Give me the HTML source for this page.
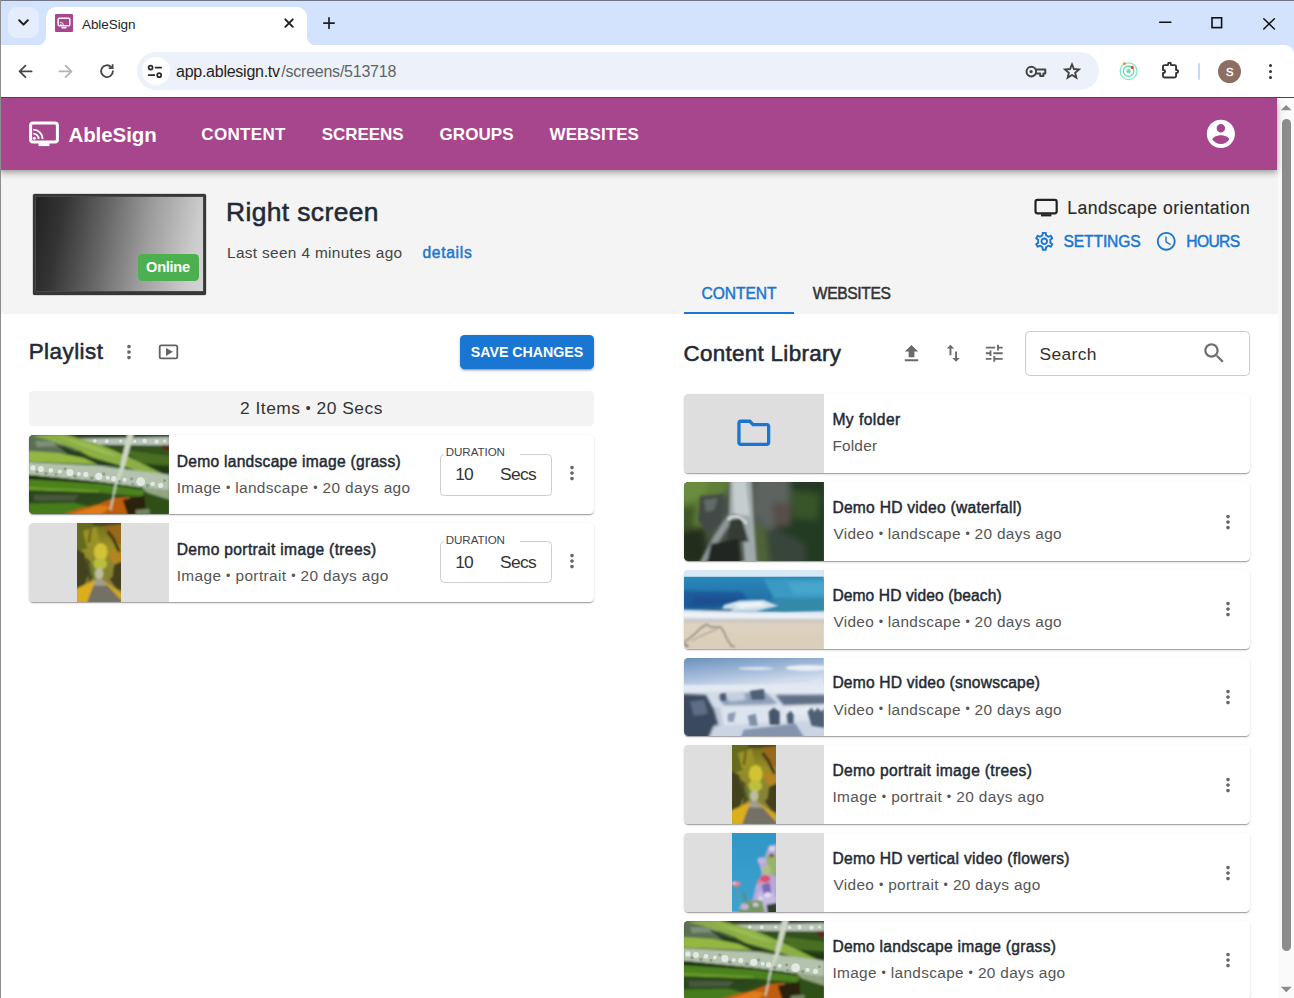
<!DOCTYPE html>
<html lang="en">
<head>
<meta charset="utf-8">
<title>AbleSign</title>
<style>
*{box-sizing:border-box;margin:0;padding:0}
html,body{width:1294px;height:998px;overflow:hidden;background:#fff}
body{position:relative;font-family:"Liberation Sans",Arial,sans-serif;color:#333;-webkit-font-smoothing:antialiased}
.abs{position:absolute}
.t{position:absolute;white-space:nowrap;line-height:1;transform-origin:0 0}
.med{-webkit-text-stroke:0.35px currentColor}
svg{display:block;position:absolute;overflow:visible}

/* ---------- browser chrome ---------- */
#tabstrip{left:0;top:0;width:1294px;height:60px;background:#d3e3fd}
#topline{left:0;top:0;width:1294px;height:1px;background:#6f7787}
#tabdd{left:8px;top:7px;width:31px;height:31px;border-radius:9px;background:#e4edfc}
#tab{left:46px;top:7px;width:261px;height:39px;background:#fff;border-radius:10px 10px 0 0}
#tab:before,#tab:after{content:"";position:absolute;bottom:0;width:10px;height:10px}
#tab:before{left:-10px;background:radial-gradient(circle at 0 0,rgba(255,255,255,0) 9.5px,#fff 10.5px)}
#tab:after{right:-10px;background:radial-gradient(circle at 100% 0,rgba(255,255,255,0) 9.5px,#fff 10.5px)}
#toolbar{left:0;top:45.4px;width:1294px;height:52px;background:#fff;border-radius:0 9px 0 0}
#omni{left:137px;top:52px;width:962px;height:38px;border-radius:19px;background:#edf2fa}
#sitebtn{left:142px;top:57px;width:28px;height:28px;border-radius:14px;background:#fff}
#pageline{left:0;top:97px;width:1294px;height:1px;background:#5a3a55}
#leftline{left:0;top:0;width:1px;height:998px;background:#8d8d8d}

/* ---------- app ---------- */
#appbar{left:0;top:98px;width:1277px;height:71.5px;background:#a7458d;box-shadow:0 2.25px 4.5px -1.1px rgba(0,0,0,.2),0 4.5px 5.6px 0 rgba(0,0,0,.14),0 1.1px 11px 0 rgba(0,0,0,.12);clip-path:inset(0 -30px -30px -30px)}
#grayzone{left:0;top:98px;width:1278px;height:216px;background:#f4f4f4}
#sbtrack{left:1278px;top:98px;width:16px;height:900px;background:#fafafa}
#sbthumb{left:1281.6px;top:119px;width:9.6px;height:832px;border-radius:5px;background:#8c8c8c}
</style>
</head>
<body>

<!-- ================= BROWSER CHROME ================= -->
<div class="abs" id="tabstrip"></div>
<div class="abs" id="tabdd"></div>
<div class="abs" id="tab"></div>
<div class="abs" id="toolbar"></div>
<div class="abs" id="omni"></div>
<div class="abs" id="sitebtn"></div>
<div class="abs" id="topline"></div>
<svg style="left:17px;top:17px" width="13" height="11" viewBox="0 0 13 11" stroke-linecap="round" stroke-linejoin="round" fill="none" stroke="#1f1f1f" stroke-width="2"><path d="M2.2 3.2 L6.5 7.6 L10.8 3.2"/></svg>
<div class="abs" style="left:55px;top:14px;width:18px;height:18px;background:#a8458d;border-radius:1px"></div>
<svg style="left:57px;top:17px" width="14" height="12" viewBox="0 0 14 12" fill="none" stroke="#fff"><rect x="1.2" y="1.2" width="11.6" height="7.6" rx="1" stroke-width="1.5"/><path d="M4.5 10.7h5" stroke-width="1.6"/><path d="M3 7.2a1.6 1.6 0 0 1 1.6 1.6M3 5.2a3.6 3.6 0 0 1 3.6 3.6" stroke-width="0.9"/></svg>
<span class="t" style="left:82.00px;top:17.60px;font-size:13.5px;font-weight:400;color:#1f1f1f;letter-spacing:-0.071px;">AbleSign</span>
<svg style="left:283px;top:17px" width="12" height="12" viewBox="0 0 12 12" stroke-linecap="round" stroke-linejoin="round" fill="none" stroke="#1f1f1f" stroke-width="1.9"><path d="M2.3 2.3 L9.8 9.8 M9.8 2.3 L2.3 9.8"/></svg>
<svg style="left:322px;top:16px" width="14" height="14" viewBox="0 0 14 14" stroke-linecap="round" stroke-linejoin="round" fill="none" stroke="#1f1f1f" stroke-width="1.7"><path d="M7 1.9 V12.3 M1.8 7.1 H12.2"/></svg>
<svg style="left:1158px;top:15px" width="14" height="14" viewBox="0 0 14 14" stroke-linecap="round" stroke-linejoin="round" fill="none" stroke="#111" stroke-width="1.5"><path d="M1.7 7.3 H12.9"/></svg>
<svg style="left:1210px;top:16px" width="14" height="14" viewBox="0 0 14 14" fill="none" stroke="#111" stroke-width="1.6"><rect x="2" y="1.8" width="9.6" height="9.8"/></svg>
<svg style="left:1262px;top:17px" width="14" height="14" viewBox="0 0 14 14" stroke-linecap="round" stroke-linejoin="round" fill="none" stroke="#111" stroke-width="1.5"><path d="M1.8 1.7 L12.4 12 M12.4 1.7 L1.8 12"/></svg>
<svg style="left:17px;top:63px" width="17" height="17" viewBox="0 0 17 17" stroke-linecap="round" stroke-linejoin="round" fill="none" stroke="#474747" stroke-width="1.8"><path d="M14.6 8.4 H2.6 M8.4 2.6 L2.6 8.4 L8.4 14.2"/></svg>
<svg style="left:57px;top:63px" width="17" height="17" viewBox="0 0 17 17" stroke-linecap="round" stroke-linejoin="round" fill="none" stroke="#b4b4b4" stroke-width="1.8"><path d="M2.4 8.4 H14.4 M8.6 2.6 L14.4 8.4 L8.6 14.2"/></svg>
<svg style="left:99px;top:63px" width="16" height="16" viewBox="0 0 16 16" stroke-linecap="round" stroke-linejoin="round" fill="none" stroke="#474747" stroke-width="1.8"><path d="M13.9 8.2 A5.9 5.9 0 1 1 12.1 3.9"/><path d="M13.6 1.3 V5.2 H9.7" stroke-linejoin="miter" stroke-linecap="butt"/></svg>
<svg style="left:147px;top:64px" width="16" height="15" viewBox="0 0 16 15" stroke-linecap="round" stroke-linejoin="round" fill="none" stroke="#2b2b2b" stroke-width="1.7"><circle cx="3.6" cy="3.6" r="2"/><path d="M8.6 3.6 H14.2"/><circle cx="12.2" cy="11.2" r="2"/><path d="M1.6 11.2 H7.4"/></svg>
<span class="t" style="left:176.00px;top:63.50px;font-size:16px;font-weight:400;color:#1f1f1f;letter-spacing:-0.257px;">app.ablesign.tv</span>
<span class="t" style="left:281.30px;top:63.50px;font-size:16px;font-weight:400;color:#5f6368;letter-spacing:-0.236px;">/screens/513718</span>
<svg style="left:1025px;top:64px" width="22" height="15" viewBox="0 0 22 15" fill="none" stroke="#444" stroke-width="2" stroke-linejoin="round"><circle cx="6.3" cy="7.6" r="4.8"/><circle cx="6.1" cy="7.6" r="1.6" fill="#444" stroke="none"/><path d="M11 5.6 H20.3 V9.6 H18.4 V12 H15.2 V9.6 H11"/></svg>
<svg style="left:1063px;top:62px" width="18" height="18" viewBox="0 0 24 24" fill="none" stroke="#444" stroke-width="2.5" stroke-linejoin="miter"><path d="M12 3.2 L14.6 9.4 L21.3 9.9 L16.2 14.3 L17.8 20.9 L12 17.4 L6.2 20.9 L7.8 14.3 L2.7 9.9 L9.4 9.4 Z"/></svg>
<svg style="left:1118px;top:60px" width="22" height="22" viewBox="0 0 22 22" fill="none"><circle cx="10.6" cy="11.2" r="8.4" stroke="#86e6c2" stroke-width="1.2"/><circle cx="10.6" cy="11.2" r="5.2" stroke="#5cdcaa" stroke-width="1.3"/><circle cx="10.6" cy="11.2" r="2.1" fill="#5fe2ad"/><circle cx="14.2" cy="7.4" r="1.6" fill="#ea4a2e"/><circle cx="6.4" cy="3.6" r="1.4" fill="#f2842c"/></svg>
<svg style="left:1159px;top:60px" width="22" height="21" viewBox="0 0 22 21" fill="none" stroke="#333" stroke-width="1.9" stroke-linejoin="round"><path d="M5.5 5.1 H9 V4.3 A1.5 1.5 0 0 1 12 4.3 V5.1 H15.6 A1.5 1.5 0 0 1 17.1 6.6 V10 H17.6 A1.5 1.5 0 0 1 17.6 13 H17.1 V16 A1.5 1.5 0 0 1 15.6 17.5 H5.5 A1.5 1.5 0 0 1 4 16 V13 H4.6 A1.5 1.5 0 0 0 4.6 10 H4 V6.6 A1.5 1.5 0 0 1 5.5 5.1 Z"/></svg>
<div class="abs" style="left:1198.4px;top:62.5px;width:1.6px;height:17px;background:#c6d9f8;border-radius:1px"></div>
<div class="abs" style="left:1218px;top:59.6px;width:23px;height:23px;border-radius:50%;background:#8d6e63"></div>
<span class="t" style="left:1226.10px;top:66.70px;font-size:11.2px;font-weight:400;color:#fff;letter-spacing:0.000px;-webkit-text-stroke:0.46px currentColor;">S</span>
<div class="abs" style="left:1268.5px;top:64.1px;width:3.4px;height:3.4px;border-radius:50%;background:#333"></div>
<div class="abs" style="left:1268.5px;top:69.9px;width:3.4px;height:3.4px;border-radius:50%;background:#333"></div>
<div class="abs" style="left:1268.5px;top:75.7px;width:3.4px;height:3.4px;border-radius:50%;background:#333"></div>

<!-- ================= APP ================= -->
<div class="abs" id="grayzone"></div>
<div class="abs" id="sbtrack"></div>
<div class="abs" id="sbthumb"></div>
<svg style="left:1280px;top:104px" width="12" height="7" viewBox="0 0 12 7"><path d="M0.8 6.2 L6.2 1 L11.6 6.2 Z" fill="#8c8c8c"/></svg>
<svg style="left:1280px;top:986px" width="12" height="7" viewBox="0 0 12 7"><path d="M0.8 0.8 L6.3 6.2 L11.8 0.8 Z" fill="#8c8c8c"/></svg><!--sbup-->
<div class="abs" style="left:33.3px;top:193.9px;width:172.8px;height:100.7px;background:#363636;border-radius:1.5px;box-shadow:0 0 0 .5px rgba(0,0,0,.25)"></div>
<div class="abs" style="left:36.2px;top:196.8px;width:166.6px;height:93.8px;box-shadow:0 0 0 .6px #555;background:linear-gradient(101deg,#222 0%,#343434 16%,#666 40%,#9c9c9c 64%,#cbcbcb 90%,#d4d4d4 100%)"></div>
<div class="abs" style="left:137.7px;top:253.6px;width:60.9px;height:27px;background:#4caf50;border-radius:4.5px"></div>
<span class="t" style="left:146.10px;top:260.00px;font-size:14.6px;font-weight:700;color:#fff;letter-spacing:-0.280px;">Online</span>
<span class="t" style="left:226.00px;top:198.70px;font-size:26.4px;font-weight:400;color:#222a35;letter-spacing:0.391px;-webkit-text-stroke:0.55px currentColor;">Right screen</span>
<span class="t" style="left:227.00px;top:245.20px;font-size:15.4px;font-weight:400;color:#444;letter-spacing:0.336px;">Last seen 4 minutes ago</span>
<span class="t" style="left:422.40px;top:245.20px;font-size:15.6px;font-weight:400;color:#1976d2;letter-spacing:0.717px;-webkit-text-stroke:0.46px currentColor;">details</span>
<svg style="left:1033px;top:197px" width="26" height="21" viewBox="0 0 26 21" fill="none" stroke="#222"><rect x="2.5" y="2.9" width="21.2" height="13.4" rx="2" stroke-width="2.2"/><path d="M8 18.3h10.4" stroke-width="2.2"/></svg>
<span class="t" style="left:1067.30px;top:199.60px;font-size:17.6px;font-weight:400;color:#2a2a2a;letter-spacing:0.470px;-webkit-text-stroke:.15px #2a2a2a;">Landscape orientation</span>
<svg style="left:1032.9px;top:230.3px" width="22.5" height="22.5" viewBox="0 0 24 24" fill="#1976d2" ><path d="M19.43 12.98c.04-.32.07-.64.07-.98 0-.34-.03-.66-.07-.98l2.11-1.65c.19-.15.24-.42.12-.64l-2-3.46c-.09-.16-.26-.25-.44-.25-.06 0-.12.01-.17.03l-2.49 1c-.52-.4-1.08-.73-1.69-.98l-.38-2.65C14.46 2.18 14.25 2 14 2h-4c-.25 0-.46.18-.49.42l-.38 2.65c-.61.25-1.17.59-1.69.98l-2.49-1c-.06-.02-.12-.03-.18-.03-.17 0-.34.09-.43.25l-2 3.46c-.13.22-.07.49.12.64l2.11 1.65c-.04.32-.07.65-.07.98 0 .33.03.66.07.98l-2.11 1.65c-.19.15-.24.42-.12.64l2 3.46c.09.16.26.25.44.25.06 0 .12-.01.17-.03l2.49-1c.52.4 1.08.73 1.69.98l.38 2.65c.03.24.24.42.49.42h4c.25 0 .46-.18.49-.42l.38-2.65c.61-.25 1.17-.59 1.69-.98l2.49 1c.06.02.12.03.18.03.17 0 .34-.09.43-.25l2-3.46c.12-.22.07-.49-.12-.64l-2.11-1.65zm-1.98-1.71c.04.31.05.52.05.73 0 .21-.02.43-.05.73l-.14 1.13.89.7 1.08.84-.7 1.21-1.27-.51-1.04-.42-.9.68c-.43.32-.84.56-1.25.73l-1.06.43-.16 1.13-.2 1.35h-1.4l-.19-1.35-.16-1.13-1.06-.43c-.43-.18-.83-.41-1.23-.71l-.91-.7-1.06.43-1.27.51-.7-1.21 1.08-.84.89-.7-.14-1.13c-.03-.31-.05-.54-.05-.74s.02-.43.05-.73l.14-1.13-.89-.7-1.08-.84.7-1.21 1.27.51 1.04.42.9-.68c.43-.32.84-.56 1.25-.73l1.06-.43.16-1.13.2-1.35h1.39l.19 1.35.16 1.13 1.06.43c.43.18.83.41 1.23.71l.91.7 1.06-.43 1.27-.51.7 1.21-1.07.85-.89.7.14 1.13zM12 8c-2.21 0-4 1.79-4 4s1.79 4 4 4 4-1.79 4-4-1.79-4-4-4zm0 6c-1.1 0-2-.9-2-2s.9-2 2-2 2 .9 2 2-.9 2-2 2z"/></svg>
<span class="t" style="left:1063.50px;top:233.60px;font-size:15.6px;font-weight:400;color:#1976d2;letter-spacing:-0.114px;-webkit-text-stroke:0.46px currentColor;">SETTINGS</span>
<svg style="left:1155.1px;top:230.1px" width="22.5" height="22.5" viewBox="0 0 24 24" fill="#1976d2" ><path d="M11.99 2C6.47 2 2 6.48 2 12s4.47 10 9.99 10C17.52 22 22 17.52 22 12S17.52 2 11.99 2zM12 20c-4.42 0-8-3.58-8-8s3.58-8 8-8 8 3.58 8 8-3.58 8-8 8zm.5-13H11v6l5.25 3.15.75-1.23-4.5-2.67z"/></svg>
<span class="t" style="left:1186.30px;top:233.60px;font-size:15.6px;font-weight:400;color:#1976d2;letter-spacing:-0.625px;-webkit-text-stroke:0.46px currentColor;">HOURS</span>
<span class="t" style="left:701.50px;top:285.80px;font-size:15.6px;font-weight:400;color:#1976d2;letter-spacing:-0.067px;-webkit-text-stroke:0.46px currentColor;">CONTENT</span>
<span class="t" style="left:812.80px;top:285.80px;font-size:15.6px;font-weight:400;color:#333;letter-spacing:-0.357px;-webkit-text-stroke:0.46px currentColor;">WEBSITES</span>
<div class="abs" style="left:683.9px;top:311.8px;width:110.4px;height:2.6px;background:#1976d2"></div>
<svg width="0" height="0" style="position:absolute"><defs>
<filter id="bl0" x="-5%" y="-5%" width="110%" height="110%"><feGaussianBlur stdDeviation="0.5"/></filter>
<filter id="bl1" x="-5%" y="-5%" width="110%" height="110%"><feGaussianBlur stdDeviation="0.9"/></filter>
<filter id="bl2" x="-5%" y="-5%" width="110%" height="110%"><feGaussianBlur stdDeviation="1.8"/></filter>
<filter id="bl3" x="-10%" y="-10%" width="120%" height="120%"><feGaussianBlur stdDeviation="3.2"/></filter>
<linearGradient id="gSea" x1="0" y1="0" x2="0" y2="1"><stop offset="0" stop-color="#2888bb"/><stop offset=".4" stop-color="#2579ad"/><stop offset=".8" stop-color="#236ea4"/><stop offset="1" stop-color="#4595b6"/></linearGradient>
<linearGradient id="gSky" x1="0" y1="0" x2=".5" y2="1"><stop offset="0" stop-color="#6a90bd"/><stop offset=".55" stop-color="#a5bcd9"/><stop offset="1" stop-color="#dbe4f0"/></linearGradient>
<linearGradient id="gTree" x1="0" y1="0" x2="0" y2="1"><stop offset="0" stop-color="#6f6c1c"/><stop offset=".3" stop-color="#988f25"/><stop offset=".6" stop-color="#868436"/><stop offset="1" stop-color="#8a7a3a"/></linearGradient>
<linearGradient id="gFall" x1="0" y1="0" x2="1" y2="0"><stop offset="0" stop-color="#4a6230"/><stop offset=".25" stop-color="#474f47"/><stop offset=".6" stop-color="#535c56"/><stop offset=".8" stop-color="#30422d"/><stop offset="1" stop-color="#243a22"/></linearGradient>
<linearGradient id="gSand" x1="0" y1="0" x2="0" y2="1"><stop offset="0" stop-color="#d9d2ca"/><stop offset=".3" stop-color="#e2d8c9"/><stop offset="1" stop-color="#dacdb9"/></linearGradient>
<linearGradient id="gFlow" x1="0" y1="0" x2="0" y2="1"><stop offset="0" stop-color="#2f97c6"/><stop offset="1" stop-color="#3ea2cd"/></linearGradient>
</defs></svg>
<span class="t" style="left:28.70px;top:341.00px;font-size:22.4px;font-weight:400;color:#222a35;letter-spacing:0.471px;-webkit-text-stroke:0.55px currentColor;">Playlist</span>
<svg style="left:117.6px;top:340.6px" width="22" height="22" viewBox="0 0 24 24" fill="#686868" ><path d="M12 8c1.1 0 2-.9 2-2s-.9-2-2-2-2 .9-2 2 .9 2 2 2zm0 2c-1.1 0-2 .9-2 2s.9 2 2 2 2-.9 2-2-.9-2-2-2zm0 6c-1.1 0-2 .9-2 2s.9 2 2 2 2-.9 2-2-.9-2-2-2z"/></svg>
<svg style="left:157px;top:341.6px" width="23" height="19" viewBox="0 0 23 19" fill="none" stroke="#626262"><rect x="2.7" y="3.3" width="17.6" height="13" rx="1.6" stroke-width="1.8"/><path d="M9 5.9 L15.9 9.8 L9 13.9 Z" fill="#626262" stroke="none"/></svg>
<div class="abs" style="left:460px;top:334.8px;width:134.2px;height:34px;background:#1976d2;border-radius:4.5px;box-shadow:0 3px 1px -2px rgba(0,0,0,.2),0 2px 2px 0 rgba(0,0,0,.14),0 1px 5px 0 rgba(0,0,0,.12)"></div>
<span class="t" style="left:470.80px;top:345.00px;font-size:14.2px;font-weight:700;color:#fff;letter-spacing:-0.009px;">SAVE CHANGES</span>
<div class="abs" style="left:29.3px;top:390.5px;width:564.6px;height:35px;background:#f3f3f3;border-radius:4.5px"></div>
<span class="t" style="left:240.00px;top:400.00px;font-size:17.4px;font-weight:400;color:#333;letter-spacing:0.500px;">2 Items <span style="font-size:.8em;position:relative;top:-.1em">•</span> 20 Secs</span>
<div class="abs" style="left:29.3px;top:435.4px;width:564.7px;height:78.75px;background:#fff;border-radius:4.5px;box-shadow:0 2px 1px -1px rgba(0,0,0,.2),0 1px 1px 0 rgba(0,0,0,.14),0 1px 3px 0 rgba(0,0,0,.12)"></div>
<div class="abs" style="left:29.3px;top:435.4px;width:139.6px;height:78.75px;background:#dedede;border-radius:4.5px 0 0 4.5px"></div>
<svg style="left:29.3px;top:435.4px;border-radius:4.5px 0 0 4.5px;overflow:hidden" width="139.6" height="78.75" viewBox="0 0 140 79" preserveAspectRatio="none"><rect width="140" height="79" fill="#2c4a1b"/>
<g filter="url(#bl1)">
<polygon points="-1,-1 42,-1 62,12 40,19 -1,17" fill="#5a7052"/>
<polygon points="6,6 30,6 34,11 8,12" fill="#7d8f78"/>
<polygon points="25,8 62,22 92,31 70,31 40,20" fill="#28401a"/>
<polygon points="60,9 141,9 141,41 105,35 90,26" fill="#30511b"/>
<polygon points="96,15 141,21 141,30 110,28" fill="#487020"/>
<polygon points="118,30 141,32 141,40 126,37" fill="#213a14"/>
<rect x="34" y="-1" width="108" height="3.4" fill="#27371e"/>
<polygon points="50,3.4 141,2 141,10.5 60,9.5" fill="#b9c3b8"/>
<polygon points="133,10 141,10 141,16 135,16" fill="#5a2a1a"/>
<polygon points="3,1 35,-1 70,9 100,22 136,40 110,36 90,30 62,22 45,13 20,5" fill="#8caf45"/>
<polygon points="30,2 60,9 90,21 80,20 50,10" fill="#9cbd53"/>
<polygon points="-1,16 30,18 55,23 69,29.5 -1,26.5" fill="#95b743"/>
<polygon points="-1,27 70,30.5 105,35 141,40 141,56 115,53 70,47 38,43.7 -1,40" fill="#b3c3ae"/>
<polygon points="112,52 141,56 141,65 118,58" fill="#93a583"/>
<polygon points="-1,40 38,43.7 70,47 114,53 114,55 70,49.5 38,46.3 -1,44.5" fill="#1c3010"/>
<polygon points="-1,44.5 70,49 115,55 116,62 70,58 -1,55.4" fill="#4b821f"/>
<polygon points="-1,52 70,55.4 70,57.6 -1,55.4" fill="#6a9a2a"/>
<polygon points="-1,55.4 76,58 70,64 35,70 -1,69" fill="#2b471b"/>
<polygon points="5,60 50,60.5 45,66 5,66" fill="#46593c"/>
<polygon points="-1,68.8 45,68 60,72 35,80 -1,80" fill="#467c1a"/>
<polygon points="114,59 141,65 141,80 116,80" fill="#2f4f18"/>
<polygon points="33,80 50,74 70,69 85,63 101,62 101,80" fill="#c05d0e"/>
<polygon points="40,80 70,70.5 82,72 72,80" fill="#e07c12"/>
<polygon points="94,65 116,61 117,80 99,80" fill="#2a2010"/>
<polygon points="107,75 121,74 121,80 107,80" fill="#6f8560"/>
<polygon points="98.7,-1 105,-1 95.4,34 88,50 82.4,75.5 81,75 86,50 90.7,34" fill="#cdd7c2"/>
</g>
<g filter="url(#bl0)"><circle cx="4" cy="33" r="2.6" fill="#e2e9e2"/><circle cx="12" cy="34" r="3" fill="#e2e9e2"/><circle cx="22" cy="35.5" r="2.4" fill="#e2e9e2"/><circle cx="31" cy="36.5" r="2" fill="#e2e9e2"/><circle cx="41" cy="37.6" r="3.6" fill="#e2e9e2"/><circle cx="50" cy="39" r="2" fill="#e2e9e2"/><circle cx="57" cy="39.5" r="2.6" fill="#e2e9e2"/><circle cx="70" cy="41.5" r="3.6" fill="#e2e9e2"/><circle cx="79" cy="43" r="2" fill="#e2e9e2"/><circle cx="85" cy="43.8" r="2.6" fill="#e2e9e2"/><circle cx="96" cy="45" r="2" fill="#e2e9e2"/><circle cx="112" cy="46.8" r="4.4" fill="#e2e9e2"/><circle cx="124" cy="49" r="2.2" fill="#e2e9e2"/><circle cx="132" cy="50.5" r="2.6" fill="#e2e9e2"/><circle cx="8" cy="37" r="1.6" fill="#8c9f88"/><circle cx="17" cy="38.6" r="1.8" fill="#8c9f88"/><circle cx="27" cy="39.5" r="1.5" fill="#8c9f88"/><circle cx="36" cy="34" r="1.4" fill="#8c9f88"/><circle cx="46" cy="41.5" r="1.8" fill="#8c9f88"/><circle cx="63" cy="43.5" r="2" fill="#8c9f88"/><circle cx="75" cy="39" r="1.6" fill="#8c9f88"/><circle cx="91" cy="47" r="1.8" fill="#8c9f88"/><circle cx="103" cy="44" r="1.6" fill="#8c9f88"/><circle cx="119" cy="51" r="2" fill="#8c9f88"/><circle cx="104" cy="49.5" r="1.6" fill="#8c9f88"/><circle cx="136" cy="46" r="1.5" fill="#8c9f88"/><circle cx="66" cy="6" r="1.8" fill="#dfe5df"/><circle cx="78" cy="6.2" r="2" fill="#dfe5df"/><circle cx="92" cy="6" r="1.6" fill="#dfe5df"/><circle cx="106" cy="6.4" r="1.6" fill="#dfe5df"/><circle cx="116" cy="6" r="2.2" fill="#dfe5df"/><circle cx="128" cy="6.6" r="2.2" fill="#dfe5df"/><circle cx="136" cy="6" r="1.6" fill="#dfe5df"/></g></svg>
<span class="t" style="left:176.70px;top:454.20px;font-size:15.6px;font-weight:400;color:#222a35;letter-spacing:0.270px;-webkit-text-stroke:0.46px currentColor;">Demo landscape image (grass)</span>
<span class="t" style="left:176.70px;top:480.40px;font-size:15.4px;font-weight:400;color:#555;letter-spacing:0.360px;">Image <span style="font-size:.8em;position:relative;top:-.1em">•</span> landscape <span style="font-size:.8em;position:relative;top:-.1em">•</span> 20 days ago</span>
<div class="abs" style="left:440px;top:453.7px;width:111.6px;height:42px;border:1px solid #cdcdcd;border-radius:4.5px"></div>
<div class="abs" style="left:443.5px;top:452.7px;width:76.2px;height:4px;background:#fff"></div>
<span class="t" style="left:445.70px;top:446.00px;font-size:11.6px;font-weight:400;color:#444;letter-spacing:-0.057px;">DURATION</span>
<span class="t" style="left:455.20px;top:465.90px;font-size:17.4px;font-weight:400;color:#333;letter-spacing:-0.900px;">10</span>
<span class="t" style="left:500.00px;top:465.90px;font-size:17.4px;font-weight:400;color:#333;letter-spacing:-0.667px;">Secs</span>
<svg style="left:560.7px;top:462.29999999999995px" width="22" height="22" viewBox="0 0 24 24" fill="#686868" ><path d="M12 8c1.1 0 2-.9 2-2s-.9-2-2-2-2 .9-2 2 .9 2 2 2zm0 2c-1.1 0-2 .9-2 2s.9 2 2 2 2-.9 2-2-.9-2-2-2zm0 6c-1.1 0-2 .9-2 2s.9 2 2 2 2-.9 2-2-.9-2-2-2z"/></svg>
<div class="abs" style="left:29.3px;top:523.15px;width:564.7px;height:78.75px;background:#fff;border-radius:4.5px;box-shadow:0 2px 1px -1px rgba(0,0,0,.2),0 1px 1px 0 rgba(0,0,0,.14),0 1px 3px 0 rgba(0,0,0,.12)"></div>
<div class="abs" style="left:29.3px;top:523.15px;width:139.6px;height:78.75px;background:#dedede;border-radius:4.5px 0 0 4.5px"></div>
<svg style="left:76.6px;top:523.15px;overflow:hidden" width="44.4" height="78.75" viewBox="0 0 45 79" preserveAspectRatio="none"><rect width="45" height="79" fill="url(#gTree)"/>
<g filter="url(#bl1)">
<rect x="-1" y="-1" width="47" height="4" fill="#4a4a14"/>
<polygon points="-1,-1 17,-1 12,24 -1,30" fill="#656b1e"/>
<polygon points="6,8 20,4 23,20 10,24" fill="#9a9226"/>
<polygon points="29,3 46,1 46,22 36,20" fill="#96691c"/>
<polygon points="31,28 46,26 46,42 36,40" fill="#b48421"/>
<path d="M31 8 L37 16 L43 29" stroke="#3a3214" stroke-width="2.6" fill="none"/>
<path d="M14 6 L12 20" stroke="#4a4a18" stroke-width="1.6" fill="none"/>
<ellipse cx="24" cy="29" rx="7" ry="9" fill="#d2c336"/>
<ellipse cx="23.5" cy="41" rx="7" ry="6" fill="#bcbf3a"/>
<ellipse cx="22.5" cy="51" rx="4.4" ry="6" fill="#bbbe9f"/>
<polygon points="-1,26 7,30 12,50 8,62 3,68 -1,68" fill="#43431f"/>
<polygon points="9,34 14,40 17,54 12,60" fill="#494922"/>
<polygon points="12,40 17,42 18,52 15,54" fill="#6b792f"/>
<polygon points="46,38 38,42 33,56 40,66 46,68" fill="#45401f"/>
<polygon points="33,44 37,44 36,54 33,56" fill="#8a8430"/>
<polygon points="19.5,56 25,56 31,63 16.5,63" fill="#a29e90"/>
<polygon points="16.5,63 31,63 46,79 46,80 10,80" fill="#736f66"/>
<polygon points="-1,66 19,57 16.5,63 10,80 -1,80" fill="#dcae1c"/>
<polygon points="25.6,56.6 46,71 46,78.5" fill="#d3a91e"/>
</g></svg>
<span class="t" style="left:176.70px;top:541.95px;font-size:15.6px;font-weight:400;color:#222a35;letter-spacing:0.342px;-webkit-text-stroke:0.46px currentColor;">Demo portrait image (trees)</span>
<span class="t" style="left:176.70px;top:568.15px;font-size:15.4px;font-weight:400;color:#555;letter-spacing:0.390px;">Image <span style="font-size:.8em;position:relative;top:-.1em">•</span> portrait <span style="font-size:.8em;position:relative;top:-.1em">•</span> 20 days ago</span>
<div class="abs" style="left:440px;top:541.4499999999999px;width:111.6px;height:42px;border:1px solid #cdcdcd;border-radius:4.5px"></div>
<div class="abs" style="left:443.5px;top:540.4499999999999px;width:76.2px;height:4px;background:#fff"></div>
<span class="t" style="left:445.70px;top:533.75px;font-size:11.6px;font-weight:400;color:#444;letter-spacing:-0.057px;">DURATION</span>
<span class="t" style="left:455.20px;top:553.65px;font-size:17.4px;font-weight:400;color:#333;letter-spacing:-0.900px;">10</span>
<span class="t" style="left:500.00px;top:553.65px;font-size:17.4px;font-weight:400;color:#333;letter-spacing:-0.667px;">Secs</span>
<svg style="left:560.7px;top:550.05px" width="22" height="22" viewBox="0 0 24 24" fill="#686868" ><path d="M12 8c1.1 0 2-.9 2-2s-.9-2-2-2-2 .9-2 2 .9 2 2 2zm0 2c-1.1 0-2 .9-2 2s.9 2 2 2 2-.9 2-2-.9-2-2-2zm0 6c-1.1 0-2 .9-2 2s.9 2 2 2 2-.9 2-2-.9-2-2-2z"/></svg>
<span class="t" style="left:683.50px;top:342.70px;font-size:22.4px;font-weight:400;color:#222a35;letter-spacing:0.307px;-webkit-text-stroke:0.55px currentColor;">Content Library</span>
<svg style="left:900.2px;top:341.8px" width="23" height="23" viewBox="0 0 24 24" fill="#6a6a6a" ><path d="M9 16h6v-6h4l-7-7-7 7h4zm-4 2h14v2H5z"/></svg>
<svg style="left:941.95px;top:341.75px" width="22.5" height="22.5" viewBox="0 0 24 24" fill="#6a6a6a" ><path d="M9 3L5 6.99h3V14h2V6.99h3L9 3zm7 14.01V10h-2v7.01h-3L15 21l4-3.99h-3z"/></svg>
<svg style="left:982.85px;top:341.75px" width="22.5" height="22.5" viewBox="0 0 24 24" fill="#6a6a6a" ><path d="M3 17v2h6v-2H3zM3 5v2h10V5H3zm10 16v-2h8v-2h-8v-2h-2v6h2zM7 9v2H3v2h4v2h2V9H7zm14 4v-2H11v2h10zm-6-4h2V7h4V5h-4V3h-2v6z"/></svg>
<div class="abs" style="left:1025px;top:331.2px;width:224.8px;height:44.5px;border:1px solid #cbcbcb;border-radius:4.5px;background:#fff"></div>
<span class="t" style="left:1039.50px;top:346.00px;font-size:17.4px;font-weight:400;color:#2f2f2f;letter-spacing:0.380px;">Search</span>
<svg style="left:1201.3px;top:340px" width="26.5" height="26.5" viewBox="0 0 24 24" fill="#6e6e6e" ><path d="M15.5 14h-.79l-.28-.27C15.41 12.59 16 11.11 16 9.5 16 5.91 13.09 3 9.5 3S3 5.91 3 9.5 5.91 16 9.5 16c1.61 0 3.09-.59 4.23-1.57l.27.28v.79l5 4.99L20.49 19l-4.99-5zm-6 0C7.01 14 5 11.99 5 9.5S7.01 5 9.5 5 14 7.01 14 9.5 11.99 14 9.5 14z"/></svg>
<div class="abs" style="left:684.2px;top:394.4px;width:565.6px;height:78.75px;background:#fff;border-radius:4.5px;box-shadow:0 2px 1px -1px rgba(0,0,0,.2),0 1px 1px 0 rgba(0,0,0,.14),0 1px 3px 0 rgba(0,0,0,.12)"></div>
<div class="abs" style="left:684.2px;top:394.4px;width:139.5px;height:78.75px;background:#dedede;border-radius:4.5px 0 0 4.5px"></div>
<svg style="left:734.2px;top:412.7px" width="39.6" height="39.6" viewBox="0 0 24 24" fill="#1976d2" ><path d="M9.17 6l2 2H20v10H4V6h5.17M10 4H4c-1.1 0-1.99.9-1.99 2L2 18c0 1.1.9 2 2 2h16c1.1 0 2-.9 2-2V8c0-1.1-.9-2-2-2h-8l-2-2z"/></svg>
<span class="t" style="left:832.40px;top:412.00px;font-size:15.6px;font-weight:400;color:#222a35;letter-spacing:0.463px;-webkit-text-stroke:0.46px currentColor;">My folder</span>
<span class="t" style="left:832.40px;top:438.30px;font-size:15.4px;font-weight:400;color:#555;letter-spacing:0.200px;">Folder</span>
<div class="abs" style="left:684.2px;top:482.15px;width:565.6px;height:78.75px;background:#fff;border-radius:4.5px;box-shadow:0 2px 1px -1px rgba(0,0,0,.2),0 1px 1px 0 rgba(0,0,0,.14),0 1px 3px 0 rgba(0,0,0,.12)"></div>
<div class="abs" style="left:684.2px;top:482.15px;width:139.5px;height:78.75px;background:#dedede;border-radius:4.5px 0 0 4.5px"></div>
<svg style="left:684.2px;top:482.15px;border-radius:4.5px 0 0 4.5px;overflow:hidden" width="139.5" height="78.75" viewBox="0 0 140 79" preserveAspectRatio="none"><rect width="140" height="79" fill="url(#gFall)"/>
<g filter="url(#bl3)">
<polygon points="-4,-4 48,-4 42,12 26,22 16,46 -4,58" fill="#5f7f37"/>
<polygon points="-4,-4 26,-4 20,14 4,20 -4,18" fill="#6c8c3d"/>
<polygon points="-4,26 12,22 10,46 -4,54" fill="#3f5628"/>
<polygon points="-4,50 20,44 26,84 -4,84" fill="#232d1b"/>
<polygon points="98,-4 144,-4 144,84 84,84 92,46 108,36" fill="#233a20"/>
<polygon points="106,8 136,12 134,38 110,36" fill="#39552a"/>
<polygon points="72,-4 106,-4 106,40 86,46 70,30" fill="#5d645f"/>
<polygon points="88,20 108,22 106,44 90,44" fill="#574f48"/>
<polygon points="70,46 100,50 122,62 122,84 74,84" fill="#38443b"/>
<polygon points="69,42 82,46 86,84 72,84" fill="#4f6339"/>
</g>
<g filter="url(#bl2)">
<polygon points="16,14 40,12 38,40 24,52 14,38" fill="#424a47"/>
<polygon points="20,18 34,16 30,28 22,30" fill="#626a68"/>
<polygon points="46,-2 68,-2 70,38 73,82 61,82 58,44 45,36" fill="#a1aaab"/>
<polygon points="49,-2 62,-2 66,34 50,32" fill="#c6cdce"/>
<polygon points="44,33 53,31 35,60 21,82 15,82 30,54" fill="#8f9799"/>
<polygon points="46,38 58,35.5 65,60 43,60" fill="#353a36"/>
<polygon points="27,62 55,57 57,82 23,82" fill="#232723"/>
</g>
<g filter="url(#bl1)">
<path d="M44 38 Q53 29 63 42" fill="none" stroke="#d3d8d9" stroke-width="3"/>
</g></svg>
<span class="t" style="left:832.40px;top:499.75px;font-size:15.6px;font-weight:400;color:#222a35;letter-spacing:0.267px;-webkit-text-stroke:0.46px currentColor;">Demo HD video (waterfall)</span>
<span class="t" style="left:833.40px;top:526.05px;font-size:15.4px;font-weight:400;color:#555;letter-spacing:0.310px;">Video <span style="font-size:.8em;position:relative;top:-.1em">•</span> landscape <span style="font-size:.8em;position:relative;top:-.1em">•</span> 20 days ago</span>
<svg style="left:1216.5px;top:510.54999999999995px" width="22" height="22" viewBox="0 0 24 24" fill="#686868" ><path d="M12 8c1.1 0 2-.9 2-2s-.9-2-2-2-2 .9-2 2 .9 2 2 2zm0 2c-1.1 0-2 .9-2 2s.9 2 2 2 2-.9 2-2-.9-2-2-2zm0 6c-1.1 0-2 .9-2 2s.9 2 2 2 2-.9 2-2-.9-2-2-2z"/></svg>
<div class="abs" style="left:684.2px;top:569.9px;width:565.6px;height:78.75px;background:#fff;border-radius:4.5px;box-shadow:0 2px 1px -1px rgba(0,0,0,.2),0 1px 1px 0 rgba(0,0,0,.14),0 1px 3px 0 rgba(0,0,0,.12)"></div>
<div class="abs" style="left:684.2px;top:569.9px;width:139.5px;height:78.75px;background:#dedede;border-radius:4.5px 0 0 4.5px"></div>
<svg style="left:684.2px;top:569.9px;border-radius:4.5px 0 0 4.5px;overflow:hidden" width="139.5" height="78.75" viewBox="0 0 140 79" preserveAspectRatio="none"><rect width="140" height="79" fill="url(#gSand)"/>
<rect y="0" width="140" height="7.4" fill="#d7e9f5"/>
<rect y="6.8" width="140" height="36" fill="url(#gSea)"/>
<g filter="url(#bl2)">
<polygon points="-2,21 58,22 66,31 30,39 -2,39" fill="#1e5a9b"/>
<polygon points="10,27 60,28 40,35 6,36" fill="#1a4f90"/>
<polygon points="80,9 142,8 142,30 90,28" fill="#3a9ac4"/>
<polygon points="104,12 142,12 142,24 110,24" fill="#46a6cc"/>
<polygon points="86,29 142,28 142,42 98,42" fill="#3089a8"/>
</g>
<g filter="url(#bl1)">
<polygon points="40,35 56,30.5 80,30 95,36 72,41.5 38,41" fill="#cfe0ea"/>
<polygon points="50,34 76,32 84,36 56,38" fill="#eef4f8"/>
<polygon points="18,38 50,39 46,41 14,40.5" fill="#2a5f80"/>
<polygon points="-2,40 40,41.5 100,42.5 142,41.5 142,50 60,49 -2,49.5" fill="#dfe8f0"/>
<polygon points="-2,43.5 60,45 142,45.5 142,47.5 -2,46.5" fill="#f2f6fa"/>
<polygon points="-2,49 142,49.5 142,53 -2,52.6" fill="#cdc8c2"/>
<path d="M0 72.5 L5 69 L11 64 L16 59 L22.3 54.6 L28 57.5 L36.8 57.4 L40 62 L43 69 L47.9 76.3 L51 77" fill="none" stroke="#8a8275" stroke-width="1.4"/>
<path d="M33 59.5 L24 63 L14 67.5 L8 71" fill="none" stroke="#9a9284" stroke-width="1"/>
<path d="M0 74 L4 77" fill="none" stroke="#7a7266" stroke-width="2"/>
</g></svg>
<span class="t" style="left:832.40px;top:587.50px;font-size:15.6px;font-weight:400;color:#222a35;letter-spacing:0.100px;-webkit-text-stroke:0.46px currentColor;">Demo HD video (beach)</span>
<span class="t" style="left:833.40px;top:613.80px;font-size:15.4px;font-weight:400;color:#555;letter-spacing:0.310px;">Video <span style="font-size:.8em;position:relative;top:-.1em">•</span> landscape <span style="font-size:.8em;position:relative;top:-.1em">•</span> 20 days ago</span>
<svg style="left:1216.5px;top:598.3px" width="22" height="22" viewBox="0 0 24 24" fill="#686868" ><path d="M12 8c1.1 0 2-.9 2-2s-.9-2-2-2-2 .9-2 2 .9 2 2 2zm0 2c-1.1 0-2 .9-2 2s.9 2 2 2 2-.9 2-2-.9-2-2-2zm0 6c-1.1 0-2 .9-2 2s.9 2 2 2 2-.9 2-2-.9-2-2-2z"/></svg>
<div class="abs" style="left:684.2px;top:657.65px;width:565.6px;height:78.75px;background:#fff;border-radius:4.5px;box-shadow:0 2px 1px -1px rgba(0,0,0,.2),0 1px 1px 0 rgba(0,0,0,.14),0 1px 3px 0 rgba(0,0,0,.12)"></div>
<div class="abs" style="left:684.2px;top:657.65px;width:139.5px;height:78.75px;background:#dedede;border-radius:4.5px 0 0 4.5px"></div>
<svg style="left:684.2px;top:657.65px;border-radius:4.5px 0 0 4.5px;overflow:hidden" width="139.5" height="78.75" viewBox="0 0 140 79" preserveAspectRatio="none"><rect width="140" height="79" fill="#bcc8da"/>
<rect width="140" height="30" fill="url(#gSky)"/>
<g filter="url(#bl1)">
<ellipse cx="72" cy="10.5" rx="18" ry="1.5" fill="#dfe7f2"/>
<ellipse cx="124" cy="10" rx="22" ry="3" fill="#e8eef6"/>
<ellipse cx="110" cy="22" rx="16" ry="1.6" fill="#cfdaea"/>
<rect x="-2" y="27" width="144" height="9" fill="#e2e9f2"/>
<polygon points="-2,35 40,33 84,35 142,37 142,48 -2,50" fill="#d3dbe8"/>
</g>
<g filter="url(#bl2)">
<polygon points="-2,36 22,37 30,52 35,70 28,82 -2,82" fill="#3a495e"/>
<polygon points="6,44 20,42 24,56 10,58" fill="#5e6e86"/>
<polygon points="34,38 80,33 94,46 60,52 40,48" fill="#90a0b8"/>
<polygon points="40,36 60,34 62,42 46,44" fill="#c4cfdf"/>
<polygon points="36,48 120,46 142,52 142,64 40,72" fill="#dce4ee"/>
<polygon points="92,37 142,37 142,46 100,48" fill="#5f6f87"/>
<polygon points="30,68 142,62 142,82 24,82" fill="#cad4e3"/>
<polygon points="100,48 142,48 142,58 110,56" fill="#e4eaf2"/>
</g>
<g filter="url(#bl1)">
<polygon points="66,33 80,31 81,42 68,42" fill="#4f5f76"/>
<polygon points="36,36 42,35 42,43 37,43" fill="#4a596f"/>
<polygon points="85,54 90,50 96,54 96,67 86,67" fill="#44546a"/>
<polygon points="103,57 107,53 110,57 110,66 104,66" fill="#4f5f75"/>
<polygon points="124,54 128,50 131,54 134,50 138,54 141,50 141,70 128,68" fill="#506076"/>
<polygon points="60,72 112,66 122,82 56,82" fill="#8494ad"/>
<polygon points="64,58 72,56 74,68 66,68" fill="#7f8fa8"/>
<polygon points="44,56 52,54 50,64 44,64" fill="#8c9bb3"/>
</g></svg>
<span class="t" style="left:832.40px;top:675.25px;font-size:15.6px;font-weight:400;color:#222a35;letter-spacing:0.200px;-webkit-text-stroke:0.46px currentColor;">Demo HD video (snowscape)</span>
<span class="t" style="left:833.40px;top:701.55px;font-size:15.4px;font-weight:400;color:#555;letter-spacing:0.310px;">Video <span style="font-size:.8em;position:relative;top:-.1em">•</span> landscape <span style="font-size:.8em;position:relative;top:-.1em">•</span> 20 days ago</span>
<svg style="left:1216.5px;top:686.05px" width="22" height="22" viewBox="0 0 24 24" fill="#686868" ><path d="M12 8c1.1 0 2-.9 2-2s-.9-2-2-2-2 .9-2 2 .9 2 2 2zm0 2c-1.1 0-2 .9-2 2s.9 2 2 2 2-.9 2-2-.9-2-2-2zm0 6c-1.1 0-2 .9-2 2s.9 2 2 2 2-.9 2-2-.9-2-2-2z"/></svg>
<div class="abs" style="left:684.2px;top:745.4px;width:565.6px;height:78.75px;background:#fff;border-radius:4.5px;box-shadow:0 2px 1px -1px rgba(0,0,0,.2),0 1px 1px 0 rgba(0,0,0,.14),0 1px 3px 0 rgba(0,0,0,.12)"></div>
<div class="abs" style="left:684.2px;top:745.4px;width:139.5px;height:78.75px;background:#dedede;border-radius:4.5px 0 0 4.5px"></div>
<svg style="left:731.5px;top:745.4px;overflow:hidden" width="44.5" height="78.75" viewBox="0 0 45 79" preserveAspectRatio="none"><rect width="45" height="79" fill="url(#gTree)"/>
<g filter="url(#bl1)">
<rect x="-1" y="-1" width="47" height="4" fill="#4a4a14"/>
<polygon points="-1,-1 17,-1 12,24 -1,30" fill="#656b1e"/>
<polygon points="6,8 20,4 23,20 10,24" fill="#9a9226"/>
<polygon points="29,3 46,1 46,22 36,20" fill="#96691c"/>
<polygon points="31,28 46,26 46,42 36,40" fill="#b48421"/>
<path d="M31 8 L37 16 L43 29" stroke="#3a3214" stroke-width="2.6" fill="none"/>
<path d="M14 6 L12 20" stroke="#4a4a18" stroke-width="1.6" fill="none"/>
<ellipse cx="24" cy="29" rx="7" ry="9" fill="#d2c336"/>
<ellipse cx="23.5" cy="41" rx="7" ry="6" fill="#bcbf3a"/>
<ellipse cx="22.5" cy="51" rx="4.4" ry="6" fill="#bbbe9f"/>
<polygon points="-1,26 7,30 12,50 8,62 3,68 -1,68" fill="#43431f"/>
<polygon points="9,34 14,40 17,54 12,60" fill="#494922"/>
<polygon points="12,40 17,42 18,52 15,54" fill="#6b792f"/>
<polygon points="46,38 38,42 33,56 40,66 46,68" fill="#45401f"/>
<polygon points="33,44 37,44 36,54 33,56" fill="#8a8430"/>
<polygon points="19.5,56 25,56 31,63 16.5,63" fill="#a29e90"/>
<polygon points="16.5,63 31,63 46,79 46,80 10,80" fill="#736f66"/>
<polygon points="-1,66 19,57 16.5,63 10,80 -1,80" fill="#dcae1c"/>
<polygon points="25.6,56.6 46,71 46,78.5" fill="#d3a91e"/>
</g></svg>
<span class="t" style="left:832.40px;top:763.00px;font-size:15.6px;font-weight:400;color:#222a35;letter-spacing:0.342px;-webkit-text-stroke:0.46px currentColor;">Demo portrait image (trees)</span>
<span class="t" style="left:832.40px;top:789.30px;font-size:15.4px;font-weight:400;color:#555;letter-spacing:0.390px;">Image <span style="font-size:.8em;position:relative;top:-.1em">•</span> portrait <span style="font-size:.8em;position:relative;top:-.1em">•</span> 20 days ago</span>
<svg style="left:1216.5px;top:773.8px" width="22" height="22" viewBox="0 0 24 24" fill="#686868" ><path d="M12 8c1.1 0 2-.9 2-2s-.9-2-2-2-2 .9-2 2 .9 2 2 2zm0 2c-1.1 0-2 .9-2 2s.9 2 2 2 2-.9 2-2-.9-2-2-2zm0 6c-1.1 0-2 .9-2 2s.9 2 2 2 2-.9 2-2-.9-2-2-2z"/></svg>
<div class="abs" style="left:684.2px;top:833.15px;width:565.6px;height:78.75px;background:#fff;border-radius:4.5px;box-shadow:0 2px 1px -1px rgba(0,0,0,.2),0 1px 1px 0 rgba(0,0,0,.14),0 1px 3px 0 rgba(0,0,0,.12)"></div>
<div class="abs" style="left:684.2px;top:833.15px;width:139.5px;height:78.75px;background:#dedede;border-radius:4.5px 0 0 4.5px"></div>
<svg style="left:731.5px;top:833.15px;overflow:hidden" width="44.5" height="78.75" viewBox="0 0 45 79" preserveAspectRatio="none"><rect width="45" height="79" fill="url(#gFlow)"/>
<g filter="url(#bl1)">
<polygon points="37,13 46,11 46,82 6,82 9,71 21,67 24,53 30,41 27,29 33,24" fill="#b6a8d8"/>
<polygon points="34,23 46,21 46,45 38,41" fill="#95b36b"/>
<polygon points="30,34 38,32 40,40 32,42" fill="#a9c37c"/>
<polygon points="27,60 40,55 46,70 46,82 20,82" fill="#c6b9e2"/>
<polygon points="30,52 38,50 40,60 32,62" fill="#7b69b2"/>
<polygon points="13,69 30,67 34,82 5,82" fill="#76995a"/>
<polygon points="35,72 46,70 46,82 36,82" fill="#2e3f2c"/>
<ellipse cx="33.5" cy="46" rx="5.4" ry="3.8" fill="#df4f68"/>
<ellipse cx="27" cy="49" rx="2.2" ry="2" fill="#e2788c"/>
<ellipse cx="4" cy="51" rx="4.8" ry="2.6" fill="#ea8199"/>
<ellipse cx="2" cy="50" rx="2" ry="1.2" fill="#f3d5dc"/>
<ellipse cx="40.5" cy="15.5" rx="3" ry="2.6" fill="#dad6e6"/>
<ellipse cx="30" cy="27.5" rx="4.2" ry="3.2" fill="#c5b2de"/>
<ellipse cx="40" cy="22.5" rx="2.4" ry="1.8" fill="#6a4a2a"/>
<ellipse cx="24" cy="72" rx="3" ry="2" fill="#d5cbe6"/><ellipse cx="13" cy="74" rx="4" ry="3" fill="#c3b4de"/><ellipse cx="36" cy="62" rx="3.4" ry="2.6" fill="#e6e0f0"/><ellipse cx="29" cy="66" rx="2.4" ry="2" fill="#e2dcee"/>
<path d="M4 53 L6 62 L9 73" stroke="#8a9a6a" stroke-width="0.8" fill="none"/>
<path d="M12 60 L14 68" stroke="#6d7a45" stroke-width="1.4" fill="none"/>
</g></svg>
<span class="t" style="left:832.40px;top:850.75px;font-size:15.6px;font-weight:400;color:#222a35;letter-spacing:0.297px;-webkit-text-stroke:0.46px currentColor;">Demo HD vertical video (flowers)</span>
<span class="t" style="left:833.40px;top:877.05px;font-size:15.4px;font-weight:400;color:#555;letter-spacing:0.355px;">Video <span style="font-size:.8em;position:relative;top:-.1em">•</span> portrait <span style="font-size:.8em;position:relative;top:-.1em">•</span> 20 days ago</span>
<svg style="left:1216.5px;top:861.55px" width="22" height="22" viewBox="0 0 24 24" fill="#686868" ><path d="M12 8c1.1 0 2-.9 2-2s-.9-2-2-2-2 .9-2 2 .9 2 2 2zm0 2c-1.1 0-2 .9-2 2s.9 2 2 2 2-.9 2-2-.9-2-2-2zm0 6c-1.1 0-2 .9-2 2s.9 2 2 2 2-.9 2-2-.9-2-2-2z"/></svg>
<div class="abs" style="left:684.2px;top:920.9px;width:565.6px;height:78.75px;background:#fff;border-radius:4.5px;box-shadow:0 2px 1px -1px rgba(0,0,0,.2),0 1px 1px 0 rgba(0,0,0,.14),0 1px 3px 0 rgba(0,0,0,.12)"></div>
<div class="abs" style="left:684.2px;top:920.9px;width:139.5px;height:78.75px;background:#dedede;border-radius:4.5px 0 0 4.5px"></div>
<svg style="left:684.2px;top:920.9px;border-radius:4.5px 0 0 4.5px;overflow:hidden" width="139.5" height="78.75" viewBox="0 0 140 79" preserveAspectRatio="none"><rect width="140" height="79" fill="#2c4a1b"/>
<g filter="url(#bl1)">
<polygon points="-1,-1 42,-1 62,12 40,19 -1,17" fill="#5a7052"/>
<polygon points="6,6 30,6 34,11 8,12" fill="#7d8f78"/>
<polygon points="25,8 62,22 92,31 70,31 40,20" fill="#28401a"/>
<polygon points="60,9 141,9 141,41 105,35 90,26" fill="#30511b"/>
<polygon points="96,15 141,21 141,30 110,28" fill="#487020"/>
<polygon points="118,30 141,32 141,40 126,37" fill="#213a14"/>
<rect x="34" y="-1" width="108" height="3.4" fill="#27371e"/>
<polygon points="50,3.4 141,2 141,10.5 60,9.5" fill="#b9c3b8"/>
<polygon points="133,10 141,10 141,16 135,16" fill="#5a2a1a"/>
<polygon points="3,1 35,-1 70,9 100,22 136,40 110,36 90,30 62,22 45,13 20,5" fill="#8caf45"/>
<polygon points="30,2 60,9 90,21 80,20 50,10" fill="#9cbd53"/>
<polygon points="-1,16 30,18 55,23 69,29.5 -1,26.5" fill="#95b743"/>
<polygon points="-1,27 70,30.5 105,35 141,40 141,56 115,53 70,47 38,43.7 -1,40" fill="#b3c3ae"/>
<polygon points="112,52 141,56 141,65 118,58" fill="#93a583"/>
<polygon points="-1,40 38,43.7 70,47 114,53 114,55 70,49.5 38,46.3 -1,44.5" fill="#1c3010"/>
<polygon points="-1,44.5 70,49 115,55 116,62 70,58 -1,55.4" fill="#4b821f"/>
<polygon points="-1,52 70,55.4 70,57.6 -1,55.4" fill="#6a9a2a"/>
<polygon points="-1,55.4 76,58 70,64 35,70 -1,69" fill="#2b471b"/>
<polygon points="5,60 50,60.5 45,66 5,66" fill="#46593c"/>
<polygon points="-1,68.8 45,68 60,72 35,80 -1,80" fill="#467c1a"/>
<polygon points="114,59 141,65 141,80 116,80" fill="#2f4f18"/>
<polygon points="33,80 50,74 70,69 85,63 101,62 101,80" fill="#c05d0e"/>
<polygon points="40,80 70,70.5 82,72 72,80" fill="#e07c12"/>
<polygon points="94,65 116,61 117,80 99,80" fill="#2a2010"/>
<polygon points="107,75 121,74 121,80 107,80" fill="#6f8560"/>
<polygon points="98.7,-1 105,-1 95.4,34 88,50 82.4,75.5 81,75 86,50 90.7,34" fill="#cdd7c2"/>
</g>
<g filter="url(#bl0)"><circle cx="4" cy="33" r="2.6" fill="#e2e9e2"/><circle cx="12" cy="34" r="3" fill="#e2e9e2"/><circle cx="22" cy="35.5" r="2.4" fill="#e2e9e2"/><circle cx="31" cy="36.5" r="2" fill="#e2e9e2"/><circle cx="41" cy="37.6" r="3.6" fill="#e2e9e2"/><circle cx="50" cy="39" r="2" fill="#e2e9e2"/><circle cx="57" cy="39.5" r="2.6" fill="#e2e9e2"/><circle cx="70" cy="41.5" r="3.6" fill="#e2e9e2"/><circle cx="79" cy="43" r="2" fill="#e2e9e2"/><circle cx="85" cy="43.8" r="2.6" fill="#e2e9e2"/><circle cx="96" cy="45" r="2" fill="#e2e9e2"/><circle cx="112" cy="46.8" r="4.4" fill="#e2e9e2"/><circle cx="124" cy="49" r="2.2" fill="#e2e9e2"/><circle cx="132" cy="50.5" r="2.6" fill="#e2e9e2"/><circle cx="8" cy="37" r="1.6" fill="#8c9f88"/><circle cx="17" cy="38.6" r="1.8" fill="#8c9f88"/><circle cx="27" cy="39.5" r="1.5" fill="#8c9f88"/><circle cx="36" cy="34" r="1.4" fill="#8c9f88"/><circle cx="46" cy="41.5" r="1.8" fill="#8c9f88"/><circle cx="63" cy="43.5" r="2" fill="#8c9f88"/><circle cx="75" cy="39" r="1.6" fill="#8c9f88"/><circle cx="91" cy="47" r="1.8" fill="#8c9f88"/><circle cx="103" cy="44" r="1.6" fill="#8c9f88"/><circle cx="119" cy="51" r="2" fill="#8c9f88"/><circle cx="104" cy="49.5" r="1.6" fill="#8c9f88"/><circle cx="136" cy="46" r="1.5" fill="#8c9f88"/><circle cx="66" cy="6" r="1.8" fill="#dfe5df"/><circle cx="78" cy="6.2" r="2" fill="#dfe5df"/><circle cx="92" cy="6" r="1.6" fill="#dfe5df"/><circle cx="106" cy="6.4" r="1.6" fill="#dfe5df"/><circle cx="116" cy="6" r="2.2" fill="#dfe5df"/><circle cx="128" cy="6.6" r="2.2" fill="#dfe5df"/><circle cx="136" cy="6" r="1.6" fill="#dfe5df"/></g></svg>
<span class="t" style="left:832.40px;top:938.50px;font-size:15.6px;font-weight:400;color:#222a35;letter-spacing:0.252px;-webkit-text-stroke:0.46px currentColor;">Demo landscape image (grass)</span>
<span class="t" style="left:832.40px;top:964.80px;font-size:15.4px;font-weight:400;color:#555;letter-spacing:0.340px;">Image <span style="font-size:.8em;position:relative;top:-.1em">•</span> landscape <span style="font-size:.8em;position:relative;top:-.1em">•</span> 20 days ago</span>
<svg style="left:1216.5px;top:949.3px" width="22" height="22" viewBox="0 0 24 24" fill="#686868" ><path d="M12 8c1.1 0 2-.9 2-2s-.9-2-2-2-2 .9-2 2 .9 2 2 2zm0 2c-1.1 0-2 .9-2 2s.9 2 2 2 2-.9 2-2-.9-2-2-2zm0 6c-1.1 0-2 .9-2 2s.9 2 2 2 2-.9 2-2-.9-2-2-2z"/></svg>
<div class="abs" id="appbar"></div>
<svg style="left:28px;top:120px" width="32" height="28" viewBox="0 0 32 28" fill="none" stroke="#fff"><rect x="2.6" y="3.1" width="26.8" height="18.8" rx="2.4" stroke-width="3"/><path d="M10.5 24.6h11" stroke-width="3"/><path d="M5.2 13.6a5.4 5.4 0 0 1 5.4 5.4M5.2 9.6a9.4 9.4 0 0 1 9.4 9.4" stroke-width="1.9"/><circle cx="6.3" cy="18.2" r="1.5" fill="#fff" stroke="none"/></svg>
<span class="t" style="left:68.40px;top:124.70px;font-size:20.5px;font-weight:700;color:#fff;letter-spacing:-0.057px;">AbleSign</span>
<span class="t" style="left:201.30px;top:126.40px;font-size:17px;font-weight:700;color:#fff;letter-spacing:0.317px;">CONTENT</span>
<span class="t" style="left:321.80px;top:126.40px;font-size:17px;font-weight:700;color:#fff;letter-spacing:-0.050px;">SCREENS</span>
<span class="t" style="left:439.50px;top:126.40px;font-size:17px;font-weight:700;color:#fff;letter-spacing:0.080px;">GROUPS</span>
<span class="t" style="left:549.60px;top:126.40px;font-size:17px;font-weight:700;color:#fff;letter-spacing:0.071px;">WEBSITES</span>
<svg style="left:1204px;top:117.1px" width="33.75" height="33.75" viewBox="0 0 24 24" fill="#fff" ><path d="M12 2C6.48 2 2 6.48 2 12s4.48 10 10 10 10-4.48 10-10S17.52 2 12 2zm0 3c1.66 0 3 1.34 3 3s-1.34 3-3 3-3-1.34-3-3 1.34-3 3-3zm0 14.2c-2.5 0-4.71-1.28-6-3.22.03-1.99 4-3.08 6-3.08 1.99 0 5.97 1.09 6 3.08-1.29 1.94-3.5 3.22-6 3.22z"/></svg>
<div class="abs" id="pageline"></div>
<div class="abs" id="leftline"></div>
</body>
</html>
